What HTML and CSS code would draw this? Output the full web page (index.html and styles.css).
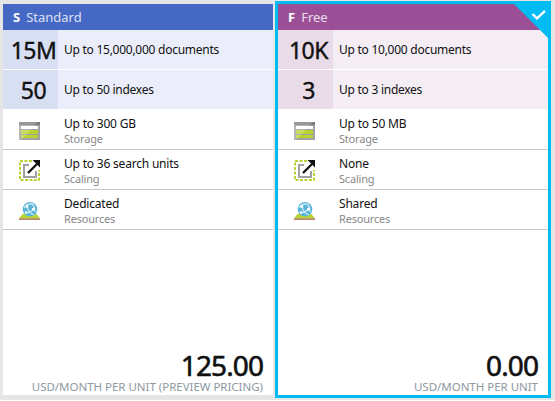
FILE: index.html
```html
<!DOCTYPE html>
<html lang="en">
<head>
<meta charset="utf-8">
<title>Pricing tiers</title>
<link rel="stylesheet" href="styles.css">
</head>
<body>
<svg class="defs" aria-hidden="true">
  <symbol id="storage" viewBox="0 0 22 22">
    <path fill="#a0a1a2" d="M0 2h21v18H0z"/><path fill="#7a7a7a" d="M0 2h21v3H0z"/>
    <path fill="#fff" d="M2 6h17v3H2z"/><path fill="#b8d432" d="M2 10h17v4H2zM2 15h17v3H2z"/>
    <path fill="#fff" opacity=".22" d="M0 2h19L2 20H0z"/>
  </symbol>
  <symbol id="scaling" viewBox="0 0 22 22">
    <path fill="none" stroke="#b8d432" stroke-width="2" stroke-dasharray="3 1.5" d="M13 1H1v19h19V10"/>
    <path fill="none" stroke="#a0a1a2" stroke-width="2" d="M10 5H5v12h12v-6"/>
    <path fill="none" stroke="#111" stroke-width="2.3" d="M9 13l9-9"/>
    <path fill="#111" d="M13.5 0H21v7.5z"/>
  </symbol>
  <symbol id="resources" viewBox="0 0 22 22">
    <path fill="#b8d432" d="M3.5 14h14l3.5 4.5H0z"/><path fill="#a0522d" d="M0 18.5h21v1.2H0z"/>
    <circle cx="11" cy="9.3" r="7.3" fill="#59b4d9"/>
    <g fill="none" stroke="#d9f0fa" stroke-width="1.1"><path d="M5 8Q8 3 14 4M8 6Q9 13 15 15M6 13Q11 13 16 8M13 4Q16 6 16 12"/></g>
    <g fill="#fff"><circle cx="8" cy="6.5" r="1.4"/><circle cx="7" cy="12.5" r="1.2"/><circle cx="14.5" cy="9" r="1.5"/></g>
  </symbol>
</svg>
<main class="tiers">
  <section class="card standard">
    <header class="head"><b>S</b><span>Standard</span></header>
    <div class="quota"><div class="num">15M</div><p>Up to 15,000,000 documents</p></div>
    <div class="quota"><div class="num">50</div><p>Up to 50 indexes</p></div>
    <div class="features">
      <div class="feature"><svg><use href="#storage"/></svg><div><p>Up to 300 GB</p><small>Storage</small></div></div>
      <div class="feature"><svg><use href="#scaling"/></svg><div><p>Up to 36 search units</p><small>Scaling</small></div></div>
      <div class="feature"><svg><use href="#resources"/></svg><div><p>Dedicated</p><small>Resources</small></div></div>
    </div>
    <footer><div class="price">125.00</div><div class="unit">USD/MONTH PER UNIT (PREVIEW PRICING)</div></footer>
  </section>
  <section class="card free selected">
    <header class="head"><b>F</b><span>Free</span></header>
    <svg class="check" viewBox="0 0 34 34"><path fill="#00bcf2" d="M0 0h34v34z"/><path fill="none" stroke="#fff" stroke-width="2.3" d="M18.5 10l4.5 4.3 8-7.5"/></svg>
    <div class="quota"><div class="num">10K</div><p>Up to 10,000 documents</p></div>
    <div class="quota"><div class="num">3</div><p>Up to 3 indexes</p></div>
    <div class="features">
      <div class="feature"><svg><use href="#storage"/></svg><div><p>Up to 50 MB</p><small>Storage</small></div></div>
      <div class="feature"><svg><use href="#scaling"/></svg><div><p>None</p><small>Scaling</small></div></div>
      <div class="feature"><svg><use href="#resources"/></svg><div><p>Shared</p><small>Resources</small></div></div>
    </div>
    <footer><div class="price">0.00</div><div class="unit">USD/MONTH PER UNIT</div></footer>
  </section>
</main>
</body>
</html>
```
FILE: styles.css
```css
* { box-sizing: border-box; }
body { margin: 0; background: #fff; color: #111; font-family: "Noto Sans", "Open Sans", sans-serif; font-size: 12px; }
p { margin: 0; }
.defs { display: none; }
.tiers { display: flex; gap: 5px; height: 400px; padding: 4px 3px 5px; background: #e6e6e6; }
.card { display: flex; flex-direction: column; width: 270px; height: 391px; background: #fff; position: relative; }
.selected { box-shadow: 0 0 0 3px #00bcf2; }
.head { display: flex; gap: 6px; height: 26px; padding-left: 10px; line-height: 26px; font-size: 13px; color: #fff; background: #4668c5; }
.head span { opacity: .8; }
.free .head { background: #9b4f96; }
.check { position: absolute; top: 0; right: 0; width: 34px; height: 34px; }
.quota { display: flex; align-items: center; height: 39px; background: #ebeefa; letter-spacing: -.26px; }
.quota + .quota { margin-top: 1px; }
.num { width: 55px; height: 39px; margin-right: 6px; padding: 1px 0 0 6px; line-height: 39px; text-align: center; font-size: 23px; letter-spacing: -.5px; -webkit-text-stroke: .4px #111; background: #d9dff3; }
.free .quota { background: #f4edf4; }
.free .num { background: #e9dbe8; }
.features { padding-top: 1px; }
.feature { display: flex; height: 40px; padding: 6px 0 0 16px; border-bottom: 1px solid #c8c8c8; letter-spacing: -.2px; }
.feature svg { width: 22px; height: 22px; margin: 4px 23px 0 0; }
.feature p { line-height: 16px; }
.feature small { display: block; font-size: 11px; line-height: 14px; color: #888; letter-spacing: -.2px; }
footer { margin-top: auto; padding: 0 10px 1px 0; text-align: right; }
.price { font-size: 28px; line-height: 28px; letter-spacing: -.9px; -webkit-text-stroke: .6px #111; }
.unit { font-size: 11.5px; line-height: 15px; color: #8d98a2; letter-spacing: -.02px; }
```
